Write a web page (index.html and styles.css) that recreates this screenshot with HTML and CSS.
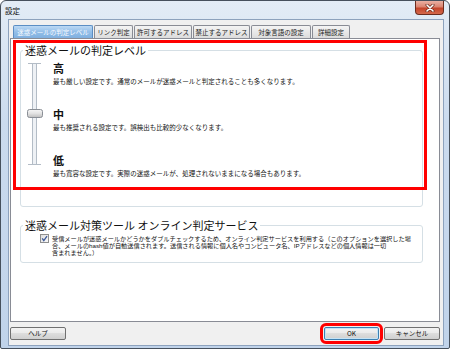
FILE: index.html
```html
<!DOCTYPE html>
<html>
	<head>
		<meta charset="UTF-8">
		<title>設定</title>
		<link rel="stylesheet" href="styles.css">
	</head>
	<body>
		<div class="window">
			<div class="titlebar">
				<span class="title">設定</span>
				<span class="close">
					<svg width="10" height="8" viewBox="0 0 10 8">
						<path d="M2 1 L8 7 M8 1 L2 7" stroke="#6a2a1a" stroke-width="3" stroke-linecap="round"/>
						<path d="M2 1 L8 7 M8 1 L2 7" stroke="#fff" stroke-width="1.6" stroke-linecap="round"/>
					</svg>
				</span>
			</div>
			<div class="client">
				<ul class="tabs">
					<li class="tab active">迷惑メールの判定レベル</li>
					<li class="tab">リンク判定</li>
					<li class="tab">許可するアドレス</li>
					<li class="tab">禁止するアドレス</li>
					<li class="tab">対象言語の設定</li>
					<li class="tab">詳細設定</li>
				</ul>
				<div class="panel">
					<fieldset class="group levels-group">
						<legend>迷惑メールの判定レベル</legend>
						<div class="levels">
							<svg class="slider" width="16" height="104" viewBox="0 0 16 104">
								<defs>
									<linearGradient id="thumb" x1="0" y1="0" x2="0" y2="1">
										<stop offset="0" stop-color="#f6f6f6"/>
										<stop offset="0.5" stop-color="#e2e2e2"/>
										<stop offset="1" stop-color="#bdbdbd"/>
									</linearGradient>
								</defs>
								<rect x="5.5" y="1.5" width="4" height="101" fill="#eef1f5" stroke="#b3bcc6"/>
								<path d="M1 1.5 H14 M1 102.5 H14" stroke="#b3bcc6" stroke-width="1"/>
								<rect x="0.5" y="47.5" width="15" height="8" rx="2" fill="url(#thumb)" stroke="#8a8f96"/>
							</svg>
							<div class="level-list">
								<div class="level">
									<div class="level-name">高</div>
									<p class="level-desc">最も厳しい設定です。通常のメールが迷惑メールと判定されることも多くなります。</p>
								</div>
								<div class="level">
									<div class="level-name">中</div>
									<p class="level-desc">最も推奨される設定です。誤検出も比較的少なくなります。</p>
								</div>
								<div class="level">
									<div class="level-name">低</div>
									<p class="level-desc">最も寛容な設定です。実際の迷惑メールが、処理されないままになる場合もあります。</p>
								</div>
							</div>
						</div>
					</fieldset>
					<fieldset class="group online-group">
						<legend>迷惑メール対策ツール オンライン判定サービス</legend>
						<label class="check-row">
							<svg class="checkbox" width="9" height="9" viewBox="0 0 9 9">
								<defs>
									<linearGradient id="box" x1="0" y1="0" x2="1" y2="1">
										<stop offset="0" stop-color="#dcdcdc"/>
										<stop offset="1" stop-color="#fbfbfb"/>
									</linearGradient>
								</defs>
								<rect x="0.5" y="0.5" width="8" height="8" fill="url(#box)" stroke="#8e8f8f"/>
								<path d="M2.2 4.4 L3.8 6.6 L7 2.2" fill="none" stroke="#3d5a99" stroke-width="1.3"/>
							</svg>
							<span class="check-text">受信メールが迷惑メールかどうかをダブルチェックするため、オンライン判定サービスを利用する（このオプションを選択した場<br>合、メールのhash値が自動送信されます。送信される情報に個人名やコンピュータ名、IPアドレスなどの個人情報は一切<br>含まれません。）</span>
						</label>
					</fieldset>
					<div class="mark mark-levels"></div>
				</div>
				<div class="footer">
					<button class="btn btn-help">ヘルプ</button>
					<button class="btn btn-ok">OK</button>
					<button class="btn btn-cancel">キャンセル</button>
				</div>
			</div>
		</div>
	</body>
</html>
```

FILE: styles.css
```css
	body{
		margin:0;
		font-family:"Noto Sans CJK JP", sans-serif;
		color:#111;
	}
	.window{
		width:450px;
		height:349px;
		box-sizing:border-box;
		border:1px solid #46505c;
		border-radius:6px 6px 2px 2px;
		background:linear-gradient(#e3ecf6, #cbdbee 35%, #c0d3ea);
		padding:0 5px 2px 7px;
		display:flex;
		flex-direction:column;
	}
	.titlebar{
		height:18px;
		display:flex;
		justify-content:space-between;
		align-items:flex-start;
	}
	.title{
		font-size:7.5px;
		line-height:9px;
		margin:5px 0 0 -3px;
	}
	.close{
		width:29px;
		height:14px;
		box-sizing:border-box;
		border:1px solid #6b2c1e;
		border-top:none;
		border-radius:0 0 4px 4px;
		background:linear-gradient(#eab0a2, #db8470 45%, #c4442a 55%, #d4694c);
		display:flex;
		align-items:center;
		justify-content:center;
	}
	.client{
		flex:1;
		background:#f0f0f0;
		border:1px solid #8da2bd;
		padding:0 3px 5px 1px;
		display:flex;
		flex-direction:column;
	}

	/* tabs */
	.tabs{
		list-style:none;
		margin:5px 0 0 3px;
		padding:0;
		height:13px;
		display:flex;
		gap:1px;
	}
	.tab{
		box-sizing:border-box;
		height:13px;
		border:1px solid #898c95;
		border-bottom:none;
		border-radius:2px 2px 0 0;
		background:linear-gradient(#f4f4f4, #e8e8e8 50%, #dcdcdc);
		font-size:6.5px;
		line-height:12px;
		text-align:center;
		white-space:nowrap;
		color:#222;
	}
	.tab:nth-child(1){width:80px;}
	.tab:nth-child(2){width:39px;}
	.tab:nth-child(3){width:58px;}
	.tab:nth-child(4){width:57px;}
	.tab:nth-child(5){width:60px;}
	.tab:nth-child(6){width:38px;}
	.tab.active{
		border-color:#5b8ec4;
		background:linear-gradient(#bcd9f4, #92bee8 50%, #80b0e0);
		color:#f6faff;
	}

	/* panel */
	.panel{
		flex:1;
		background:#fff;
		border:1px solid #898c95;
		position:relative;
	}
	.group{
		margin:0 0 0 9px;
		width:403px;
		box-sizing:border-box;
		padding:0 2px;
		border:1px solid #d5dfe5;
		border-radius:3px;
		min-inline-size:0;
	}
	.group legend{
		padding:0 2px;
		font-size:11px;
		line-height:13px;
		color:#111;
	}
	.levels-group{
		margin-top:5px;
		padding-bottom:29px;
	}
	.levels{
		display:flex;
		gap:10px;
		padding:5px 0 0 4px;
	}
	.slider{
		display:block;
		flex:none;
	}
	.level{
		margin-bottom:23px;
	}
	.level:last-child{
		margin-bottom:0;
	}
	.level-name{
		font-size:11px;
		line-height:12px;
		font-weight:bold;
	}
	.level-desc{
		margin:3px 0 0;
		font-size:6.5px;
		line-height:8px;
		white-space:nowrap;
	}
	.online-group{
		margin-top:12px;
		padding-bottom:6px;
	}
	.check-row{
		display:flex;
		align-items:flex-start;
		gap:3px;
		padding:2px 0 0 17px;
	}
	.checkbox{
		display:block;
		flex:none;
	}
	.check-text{
		font-family:"Liberation Sans", "Noto Sans CJK JP", sans-serif;
		font-size:6.2px;
		line-height:7px;
		padding-top:1px;
		white-space:nowrap;
	}

	/* red marks over the shot */
	.mark{
		position:absolute;
		border:3px solid #f00;
		box-sizing:border-box;
	}
	.mark-levels{
		left:2px;
		top:1px;
		width:414px;
		height:150px;
	}

	/* buttons */
	.footer{
		display:flex;
		margin-top:5px;
		height:13px;
	}
	.btn{
		height:13px;
		box-sizing:border-box;
		padding:0;
		border:1px solid #707070;
		border-radius:2px;
		background:linear-gradient(#f3f3f3, #ebebeb 45%, #dddddd 50%, #cfcfcf);
		font-family:"Noto Sans CJK JP", sans-serif;
		font-size:6.5px;
		line-height:11px;
		color:#111;
	}
	.btn-help{
		width:56px;
	}
	.btn-ok{
		width:55px;
		margin-left:auto;
		border-color:#3c7fb1;
		box-shadow:inset 0 0 0 1px #c4e3f6;
		outline:3px solid #f00;
		outline-offset:1px;
	}
	.btn-cancel{
		width:56px;
		margin-left:5px;
	}
```
